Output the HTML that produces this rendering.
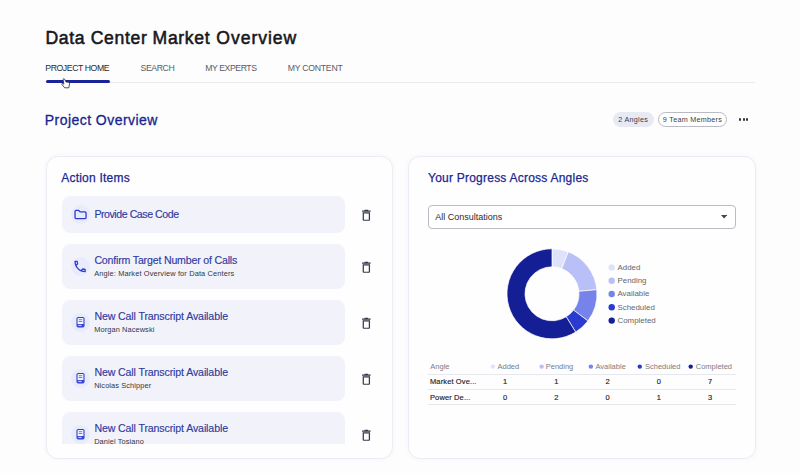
<!DOCTYPE html>
<html lang="en">
<head>
<meta charset="utf-8">
<title>Data Center Market Overview</title>
<style>
*{box-sizing:border-box;margin:0;padding:0}
html,body{width:800px;height:473px;overflow:hidden;background:#fdfdfe}
body{position:relative;font-family:"Liberation Sans",Arial,sans-serif;color:#1a1a1f}
.abs{position:absolute;white-space:nowrap;line-height:1}
#title{left:45.4px;top:30.4px;font-size:17.6px;font-weight:400;-webkit-text-stroke:.55px #17171c;color:#17171c;letter-spacing:.66px}
.tab{top:64.2px;font-size:8.7px;color:#5a5b62}
#tab1{left:45.3px;color:#2a2a30;letter-spacing:-.42px}
#tab2{left:140.5px;letter-spacing:-.39px}
#tab3{left:205.2px;letter-spacing:-.43px}
#tab4{left:287.7px;letter-spacing:-.25px}
#tabline{left:46px;top:82px;width:709px;height:1px;background:#eaebef}
#tabul{left:46px;top:79.7px;width:64px;height:3px;border-radius:2px;background:#1a2499}
#po{-webkit-text-stroke:.3px #18248f;left:44.8px;top:112.9px;font-size:14px;color:#18248f;letter-spacing:.45px}
.chip{top:112px;height:15px;border-radius:8px;font-size:7.2px;letter-spacing:.28px;line-height:15px;text-align:center;color:#3a3b44}
#chip1{left:612.5px;width:41.5px;background:#e7e9f3}
#chip2{left:658px;width:69px;border:1px solid #b9bac2;line-height:13px;background:#fff}
.dot3{top:118.3px;width:2.3px;height:2.3px;border-radius:50%;background:#33343c}
.card{top:156px;height:302.5px;background:#fefeff;border:1px solid #ebedf3;border-radius:12px;box-shadow:0 0 5px rgba(60,70,140,.05)}
#card1{left:45.6px;width:347.4px}
#card2{left:408px;width:348px}
.ctitle{-webkit-text-stroke:.25px #1a2690;top:172.3px;font-size:12px;color:#1a2690;letter-spacing:.23px}
#list{left:46px;top:190px;width:347px;height:254px;overflow:hidden}
.item{left:16.2px;width:283.2px;height:44.5px;background:#f2f3fa;border-radius:8px}
.ic{left:24.6px;width:19px;height:19px;border-radius:50%;background:#e8ebfb}
.ic svg{position:absolute;left:0;top:0;width:19px;height:19px}
.it{-webkit-text-stroke:.15px #2f3a9e;left:48.4px;font-size:10.6px;color:#2f3a9e}
.is{left:48.2px;font-size:7.4px;color:#34353c}
.trash{left:312.9px;width:14.7px;height:14.7px}
.sel{left:428px;top:205px;width:308px;height:24px;border:1px solid #bbbcc3;border-radius:4px;background:#fff}
#seltxt{left:435.3px;top:213.3px;font-size:9px;color:#2a2b31}
.lg{left:617.5px;font-size:7.9px;color:#666}
.ld{left:608.4px;width:6.6px;height:6.6px;border-radius:50%}
.th{font-size:7.5px;color:#7b7c84;top:362.7px}
.td{font-size:7.5px;color:#1e1f25;-webkit-text-stroke:.15px #1e1f25}
.hl{left:428px;width:308px;height:1px;background:#e7e8ee}
.hd{width:4.4px;height:4.4px;border-radius:50%;top:364.3px}
.num{width:20px;text-align:center}
</style>
</head>
<body>
<div id="title" class="abs">Data Center <span style="margin-left:-.5px">Market</span> <span style="letter-spacing:.93px;margin-left:.5px">Overview</span></div>
<div id="tabline" class="abs"></div>
<div id="tabul" class="abs"></div>
<div id="tab1" class="abs tab">PROJECT HOME</div>
<svg class="abs" style="left:60.8px;top:77.6px" width="10" height="11" viewBox="0 0 10 11"><path d="M2 1.2 Q2.7 .3 3.6 1.1 L5 4 L7.6 4.3 Q8.8 4.7 8.5 6.1 L7.8 9.8 L3.7 9.8 L.9 6.4 Q.6 5.2 1.8 5.3 L2.9 6.2 Z" fill="#fff" stroke="#26262b" stroke-width=".8" stroke-linejoin="round"/></svg>
<div id="tab2" class="abs tab">SEARCH</div>
<div id="tab3" class="abs tab">MY EXPERTS</div>
<div id="tab4" class="abs tab">MY CONTENT</div>

<div id="po" class="abs">Project Overview</div>
<div id="chip1" class="abs chip">2 Angles</div>
<div id="chip2" class="abs chip">9 Team Members</div>
<div class="abs dot3" style="left:739px"></div>
<div class="abs dot3" style="left:742.6px"></div>
<div class="abs dot3" style="left:746.2px"></div>

<div id="card1" class="abs card"></div>
<div id="card2" class="abs card"></div>

<div id="ct1" class="abs ctitle" style="left:61.2px">Action Items</div>
<div id="ct2" class="abs ctitle" style="left:428px">Your Progress Across Angles</div>

<div id="list" class="abs">
<div class="abs item" style="top:5.800000000000011px;height:36.8px"></div>
<div class="abs ic" style="top:14.70px"><svg viewBox="-9.5 -9.5 19 19"><path d="M-5.45 -3 a1.05 1.05 0 0 1 1.05 -1.05 h2.6 l1.35 1.45 h4.95 a1.05 1.05 0 0 1 1.05 1.05 v4.65 a1.05 1.05 0 0 1 -1.05 1.05 h-8.9 a1.05 1.05 0 0 1 -1.05 -1.05 z" fill="none" stroke="#2b3bd0" stroke-width="1.3" stroke-linejoin="round"/></svg></div>
<div id="it0" class="abs it" style="top:18.60px;letter-spacing:-0.45px">Provide Case Code</div>
<div class="abs trash" style="top:17.70px"><svg viewBox="0 0 24 24" width="14.7" height="14.7"><path fill="#353849" fill-rule="evenodd" d="M6 19c0 1.1.9 2 2 2h8c1.1 0 2-.9 2-2V7H6v12zM8 9h8v10H8V9zm7.5-5l-1-1h-5l-1 1H5v2h14V4h-3.500z"/></svg></div>
<div class="abs item" style="top:54.30000000000001px;height:44.9px"></div>
<div class="abs ic" style="top:67.25px"><svg viewBox="-9.5 -9.5 19 19"><path transform="translate(-8.0 -7.6) scale(.633)" fill="#2b3bd0" d="M6.54 5c.06.89.21 1.76.45 2.59l-1.2 1.2c-.41-1.2-.67-2.47-.76-3.79h1.51m9.86 12.02c.85.24 1.72.39 2.6.45v1.49c-1.32-.09-2.59-.35-3.8-.75l1.2-1.19M7.5 3H4c-.55 0-1 .45-1 1 0 9.39 7.61 17 17 17 .55 0 1-.45 1-1v-3.49c0-.55-.45-1-1-1-1.24 0-2.45-.2-3.57-.57-.1-.04-.21-.05-.31-.05-.26 0-.51.1-.71.29l-2.2 2.2c-2.83-1.45-5.15-3.76-6.59-6.59l2.2-2.2c.28-.28.36-.67.25-1.02C8.700 6.450 8.500 5.250 8.500 4c0-.55-.45-1-1-1z"/></svg></div>
<div id="it1" class="abs it" style="top:64.80px;letter-spacing:-0.18px">Confirm Target Number of Calls</div>
<div id="is1" class="abs is" style="top:79.50px;letter-spacing:0.14px">Angle: Market Overview for Data Centers</div>
<div class="abs trash" style="top:70.25px"><svg viewBox="0 0 24 24" width="14.7" height="14.7"><path fill="#353849" fill-rule="evenodd" d="M6 19c0 1.1.9 2 2 2h8c1.1 0 2-.9 2-2V7H6v12zM8 9h8v10H8V9zm7.5-5l-1-1h-5l-1 1H5v2h14V4h-3.500z"/></svg></div>
<div class="abs item" style="top:110.30000000000001px;height:44.9px"></div>
<div class="abs ic" style="top:123.25px"><svg viewBox="-9.5 -9.5 19 19"><g transform="translate(0 -.4)"><rect x="-3.5" y="-4.7" width="7" height="9.6" rx="1.2" fill="#f1f3fe" stroke="#2b3bd0" stroke-width="1.05"/><path d="M-1.8 -2.4 h3.6 M-1.8 -.6 h3.6" stroke="#4a58dc" stroke-width=".75" fill="none"/><path d="M-3.3 1.9 h6.6 v2.8 h-6.6 z" fill="#2b3bd0"/><path d="M-2.4 3.2 h3.7" stroke="#fff" stroke-width=".85"/></g></svg></div>
<div id="it2" class="abs it" style="top:120.80px;letter-spacing:-0.12px">New Call Transcript Available</div>
<div id="is2" class="abs is" style="top:135.50px;letter-spacing:0.1px">Morgan Nacewski</div>
<div class="abs trash" style="top:126.25px"><svg viewBox="0 0 24 24" width="14.7" height="14.7"><path fill="#353849" fill-rule="evenodd" d="M6 19c0 1.1.9 2 2 2h8c1.1 0 2-.9 2-2V7H6v12zM8 9h8v10H8V9zm7.5-5l-1-1h-5l-1 1H5v2h14V4h-3.500z"/></svg></div>
<div class="abs item" style="top:166.3px;height:44.9px"></div>
<div class="abs ic" style="top:179.25px"><svg viewBox="-9.5 -9.5 19 19"><g transform="translate(0 -.4)"><rect x="-3.5" y="-4.7" width="7" height="9.6" rx="1.2" fill="#f1f3fe" stroke="#2b3bd0" stroke-width="1.05"/><path d="M-1.8 -2.4 h3.6 M-1.8 -.6 h3.6" stroke="#4a58dc" stroke-width=".75" fill="none"/><path d="M-3.3 1.9 h6.6 v2.8 h-6.6 z" fill="#2b3bd0"/><path d="M-2.4 3.2 h3.7" stroke="#fff" stroke-width=".85"/></g></svg></div>
<div id="it3" class="abs it" style="top:176.80px;letter-spacing:-0.12px">New Call Transcript Available</div>
<div id="is3" class="abs is" style="top:191.50px;letter-spacing:0.1px">Nicolas Schipper</div>
<div class="abs trash" style="top:182.25px"><svg viewBox="0 0 24 24" width="14.7" height="14.7"><path fill="#353849" fill-rule="evenodd" d="M6 19c0 1.1.9 2 2 2h8c1.1 0 2-.9 2-2V7H6v12zM8 9h8v10H8V9zm7.5-5l-1-1h-5l-1 1H5v2h14V4h-3.500z"/></svg></div>
<div class="abs item" style="top:222.3px;height:44.9px"></div>
<div class="abs ic" style="top:235.25px"><svg viewBox="-9.5 -9.5 19 19"><g transform="translate(0 -.4)"><rect x="-3.5" y="-4.7" width="7" height="9.6" rx="1.2" fill="#f1f3fe" stroke="#2b3bd0" stroke-width="1.05"/><path d="M-1.8 -2.4 h3.6 M-1.8 -.6 h3.6" stroke="#4a58dc" stroke-width=".75" fill="none"/><path d="M-3.3 1.9 h6.6 v2.8 h-6.6 z" fill="#2b3bd0"/><path d="M-2.4 3.2 h3.7" stroke="#fff" stroke-width=".85"/></g></svg></div>
<div id="it4" class="abs it" style="top:232.80px;letter-spacing:-0.12px">New Call Transcript Available</div>
<div id="is4" class="abs is" style="top:247.50px;letter-spacing:0.1px">Daniel Tosiano</div>
<div class="abs trash" style="top:238.25px"><svg viewBox="0 0 24 24" width="14.7" height="14.7"><path fill="#353849" fill-rule="evenodd" d="M6 19c0 1.1.9 2 2 2h8c1.1 0 2-.9 2-2V7H6v12zM8 9h8v10H8V9zm7.5-5l-1-1h-5l-1 1H5v2h14V4h-3.500z"/></svg></div>
</div>
<div class="abs sel"></div><div id="seltxt" class="abs">All Consultations</div>
<svg class="abs" style="left:721.3px;top:215.2px" width="6.2" height="3.6" viewBox="0 0 7 4"><path d="M0 0 h7 l-3.5 4 z" fill="#44454c"/></svg>
<svg class="abs" style="left:0;top:0" width="800" height="473" viewBox="0 0 800 473"><path d="M552.00 248.80 A45 45 0 0 1 568.26 251.84 L561.75 268.62 A27 27 0 0 0 552.00 266.80 Z" fill="#dfe3fa" stroke="#fff" stroke-width="0.7"/><path d="M568.26 251.84 A45 45 0 0 1 596.81 289.65 L578.88 291.31 A27 27 0 0 0 561.75 268.62 Z" fill="#b9c0f7" stroke="#fff" stroke-width="0.7"/><path d="M596.81 289.65 A45 45 0 0 1 587.91 320.92 L573.55 310.07 A27 27 0 0 0 578.88 291.31 Z" fill="#7683ea" stroke="#fff" stroke-width="0.7"/><path d="M587.91 320.92 A45 45 0 0 1 575.69 332.06 L566.21 316.76 A27 27 0 0 0 573.55 310.07 Z" fill="#2a3bd0" stroke="#fff" stroke-width="0.7"/><path d="M575.69 332.06 A45 45 0 1 1 552.00 248.80 L552.00 266.80 A27 27 0 1 0 566.21 316.76 Z" fill="#141f96" stroke="#fff" stroke-width="0.7"/><circle cx="611.7" cy="267.40" r="3.2" fill="#dfe3fa"/><circle cx="611.7" cy="280.70" r="3.2" fill="#b9c0f7"/><circle cx="611.7" cy="294.00" r="3.2" fill="#7683ea"/><circle cx="611.7" cy="307.30" r="3.2" fill="#2a3bd0"/><circle cx="611.7" cy="320.60" r="3.2" fill="#141f96"/><circle cx="492.85" cy="366.6" r="2.2" fill="#dfe3fa"/><circle cx="541.60" cy="366.6" r="2.2" fill="#b9c0f7"/><circle cx="590.85" cy="366.6" r="2.2" fill="#7683ea"/><circle cx="639.80" cy="366.6" r="2.2" fill="#2a3bd0"/><circle cx="690.70" cy="366.6" r="2.2" fill="#141f96"/></svg>
<div id="lg0" class="abs lg" style="top:263.60px">Added</div>
<div id="lg1" class="abs lg" style="top:276.90px">Pending</div>
<div id="lg2" class="abs lg" style="top:290.20px">Available</div>
<div id="lg3" class="abs lg" style="top:303.50px">Scheduled</div>
<div id="lg4" class="abs lg" style="top:316.80px">Completed</div>
<div id="thA" class="abs th" style="left:430.3px;letter-spacing:0">Angle</div>
<div id="th0" class="abs th" style="left:497.5px;letter-spacing:0px">Added</div>
<div id="th1" class="abs th" style="left:545.75px;letter-spacing:0px">Pending</div>
<div id="th2" class="abs th" style="left:595.5px;letter-spacing:0px">Available</div>
<div id="th3" class="abs th" style="left:645px;letter-spacing:0px">Scheduled</div>
<div id="th4" class="abs th" style="left:695.75px;letter-spacing:0px">Completed</div>
<div class="abs hl" style="top:373.5px"></div>
<div class="abs hl" style="top:389px"></div>
<div class="abs hl" style="top:404px"></div>
<div id="rn0" class="abs td" style="left:430px;letter-spacing:.12px;top:378.10px">Market Ove...</div>
<div class="abs td num" style="left:495px;top:378.10px">1</div>
<div class="abs td num" style="left:546.25px;top:378.10px">1</div>
<div class="abs td num" style="left:597.5px;top:378.10px">2</div>
<div class="abs td num" style="left:648.75px;top:378.10px">0</div>
<div class="abs td num" style="left:700px;top:378.10px">7</div>
<div id="rn1" class="abs td" style="left:430px;letter-spacing:.12px;top:393.50px">Power De...</div>
<div class="abs td num" style="left:495px;top:393.50px">0</div>
<div class="abs td num" style="left:546.25px;top:393.50px">2</div>
<div class="abs td num" style="left:597.5px;top:393.50px">0</div>
<div class="abs td num" style="left:648.75px;top:393.50px">1</div>
<div class="abs td num" style="left:700px;top:393.50px">3</div>
</body>
</html>
